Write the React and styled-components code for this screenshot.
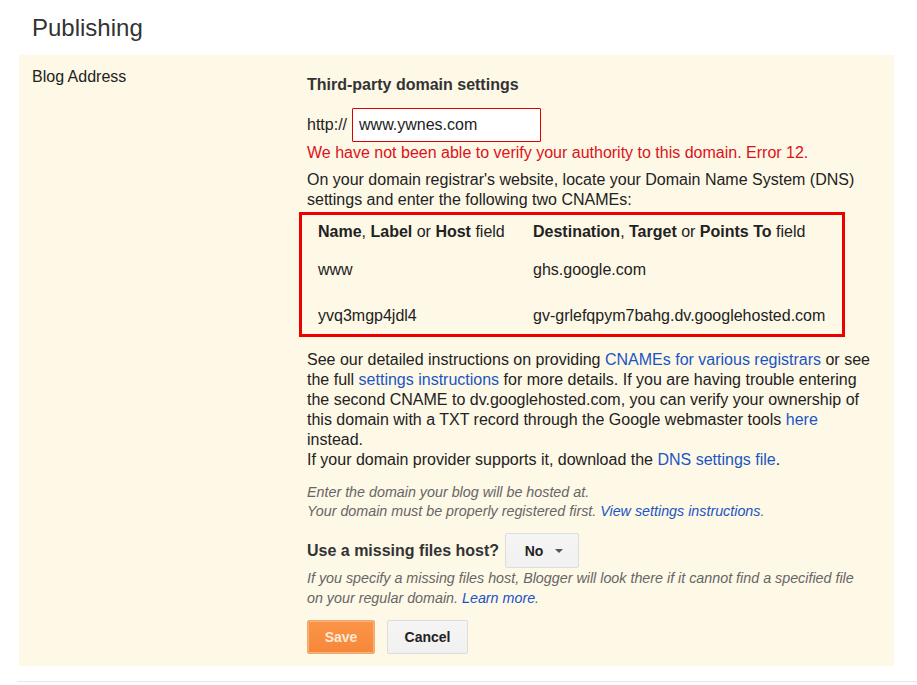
import styled, { createGlobalStyle } from "styled-components";

const GlobalStyle = createGlobalStyle`
  body {
    margin: 0;
    background: #fff;
    font-family: Arial, "Liberation Sans", sans-serif;
    color: #222;
  }
`;

const Page = styled.div`
  width: 917px;
  height: 685px;
  overflow: hidden;
`;

const Heading = styled.h1`
  margin: 0;
  padding: 13px 0 0 32px;
  height: 55px;
  box-sizing: border-box;
  font-size: 24px;
  font-weight: normal;
  line-height: 30px;
  color: #333;
`;

const Panel = styled.div`
  margin-left: 19px;
  width: 875px;
  box-sizing: border-box;
  background: #fef8e6;
  padding: 13px 19px 12px 13px;
  display: grid;
  grid-template-columns: 275px 1fr;
`;

const Label = styled.div`
  font-size: 16px;
  line-height: 18px;
  color: #222;
`;

const Content = styled.div`
  padding-top: 7px;
  font-size: 16px;
  line-height: 20px;
  color: #222;
`;

const Title = styled.div`
  font-weight: bold;
  color: #333;
`;

const UrlRow = styled.div`
  margin-top: 13px;
  display: flex;
  align-items: center;
  gap: 5px;
`;

const Input = styled.input`
  width: 189px;
  height: 34px;
  box-sizing: border-box;
  border: 1px solid #d00;
  border-radius: 1px;
  padding: 0 6px;
  font-family: Arial, "Liberation Sans", sans-serif;
  font-size: 16px;
  color: #222;
  background: #fff;
  outline: none;
`;

const Error = styled.div`
  margin-top: 1px;
  color: #dd1120;
`;

const Para = styled.p`
  margin: ${(p) => p.$mt || 0}px 0 0;
`;

const CnameBox = styled.div`
  margin: 2px 0 0 -8px;
  width: 546px;
  height: 125px;
  box-sizing: border-box;
  border: 3px solid #ee0000;
  padding: 7px 0 0 16px;
  display: grid;
  grid-template-columns: 215px 1fr;
  grid-template-rows: 20px 20px 20px;
  row-gap: 18px;
  align-content: start;
  & > :nth-child(n + 5) {
    margin-top: 8px;
  }
`;

const Cell = styled.div`
  white-space: nowrap;
`;

const Link = styled.a`
  color: #1a55c4;
  text-decoration: none;
  cursor: pointer;
`;

const Hint = styled.div`
  margin-top: ${(p) => p.$mt || 0}px;
  max-width: 560px;
  font-size: 14.3px;
  line-height: ${(p) => p.$lh || 19}px;
  font-style: italic;
  color: #666;
`;

const HostRow = styled.div`
  margin-top: 12px;
  display: flex;
  align-items: center;
  gap: 6px;
`;

const HostLabel = styled.span`
  font-weight: bold;
  color: #333;
`;

const Dropdown = styled.button`
  width: 74px;
  height: 35px;
  box-sizing: border-box;
  border: 1px solid #dcdcdc;
  border-radius: 2px;
  background: linear-gradient(#f5f5f5, #f1f1f1);
  display: flex;
  align-items: center;
  justify-content: center;
  gap: 12px;
  padding: 0 0 0 4px;
  font-family: Arial, "Liberation Sans", sans-serif;
  font-size: 14px;
  font-weight: bold;
  color: #222;
`;

const Caret = styled.span`
  width: 0;
  height: 0;
  border-left: 4px solid transparent;
  border-right: 4px solid transparent;
  border-top: 4px solid #555;
`;

const Buttons = styled.div`
  margin-top: 12px;
  display: flex;
  gap: 12px;
`;

const Button = styled.button`
  height: 34px;
  min-width: ${(p) => p.$w}px;
  box-sizing: border-box;
  border-radius: 2px;
  font-family: Arial, "Liberation Sans", sans-serif;
  font-size: 14px;
  font-weight: bold;
  padding: 0 14px;
  border: 1px solid ${(p) => (p.$primary ? "#f0a76e" : "#dcdcdc")};
  background: ${(p) =>
    p.$primary ? "linear-gradient(#fb9447, #f6873a)" : "linear-gradient(#f5f5f5, #f1f1f1)"};
  color: ${(p) => (p.$primary ? "#ffe9d6" : "#222")};
  box-shadow: ${(p) => (p.$primary ? "inset 0 0 0 1px #f9b37a" : "none")};
`;

const Rule = styled.div`
  margin: 15px 0 0 17px;
  height: 1px;
  background: #e5e5e5;
`;

export default function App() {
  return (
    <Page>
      <GlobalStyle />
      <Heading>Publishing</Heading>
      <Panel>
        <Label>Blog Address</Label>
        <Content>
          <Title>Third-party domain settings</Title>
          <UrlRow>
            <span>http://</span>
            <Input defaultValue="www.ywnes.com" />
          </UrlRow>
          <Error>We have not been able to verify your authority to this domain. Error 12.</Error>
          <Para $mt={7}>
            On your domain registrar's website, locate your Domain Name System (DNS) settings and
            enter the following two CNAMEs:
          </Para>
          <CnameBox>
            <Cell>
              <b>Name</b>, <b>Label</b> or <b>Host</b> field
            </Cell>
            <Cell>
              <b>Destination</b>, <b>Target</b> or <b>Points To</b> field
            </Cell>
            <Cell>www</Cell>
            <Cell>ghs.google.com</Cell>
            <Cell>yvq3mgp4jdl4</Cell>
            <Cell>gv-grlefqpym7bahg.dv.googlehosted.com</Cell>
          </CnameBox>
          <Para $mt={13}>
            See our detailed instructions on providing <Link>CNAMEs for various registrars</Link> or
            see the full <Link>settings instructions</Link> for more details. If you are having
            trouble entering the second CNAME to dv.googlehosted.com, you can verify your ownership
            of this domain with a TXT record through the Google webmaster tools <Link>here</Link>{" "}
            instead.
            <br />
            If your domain provider supports it, download the <Link>DNS settings file</Link>.
          </Para>
          <Hint $mt={13}>
            Enter the domain your blog will be hosted at.
            <br />
            Your domain must be properly registered first. <Link>View settings instructions</Link>.
          </Hint>
          <HostRow>
            <HostLabel>Use a missing files host?</HostLabel>
            <Dropdown>
              No <Caret />
            </Dropdown>
          </HostRow>
          <Hint $lh={20}>
            If you specify a missing files host, Blogger will look there if it cannot find a
            specified file on your regular domain. <Link>Learn more</Link>.
          </Hint>
          <Buttons>
            <Button $primary $w={68}>Save</Button>
            <Button $w={81}>Cancel</Button>
          </Buttons>
        </Content>
      </Panel>
      <Rule />
    </Page>
  );
}
